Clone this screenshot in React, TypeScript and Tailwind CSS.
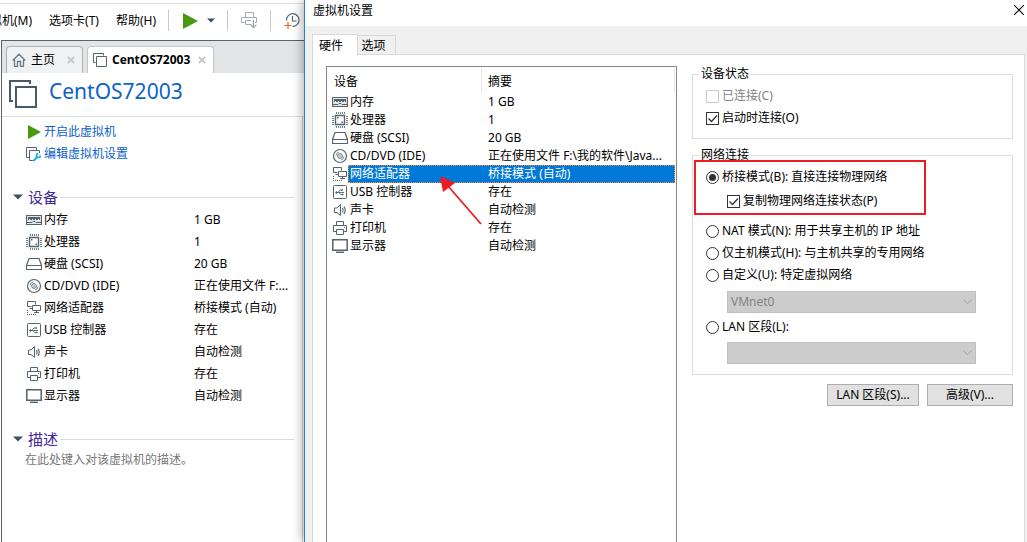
import type { ReactNode } from 'react';

type Device = {
  name: string;
  icon: ReactNode;
  summary: string;
  fullSummary: string;
};

const Icon = ({ children, className = 'w-4 h-4' }: { children: ReactNode; className?: string }) => (
  <svg viewBox="0 0 16 16" className={`shrink-0 ${className}`} fill="none" stroke="#53646f" aria-hidden="true">
    {children}
  </svg>
);

const MemoryIcon = (
  <Icon>
    <path d="M.5 3.500h15v9H.5z" fill="#e3e8eb" strokeWidth="1.200" />
    <path d="M2 5h12v3h-1V7h-1v1h-2V7H9v1H7V7H6v1H4V7H3v1H2z" fill="#53646f" stroke="none" />
    <path d="M1 10.500h5l1-1h2l1 1h5" />
  </Icon>
);

const CpuIcon = (
  <Icon>
    <path d="M3.500 3.500h9v9h-9z" strokeWidth="1.400" />
    <path
      d="M4.500 0v2M6.500 0v2M8.500 0v2M10.500 0v2M12.500 0v2M4.500 14v2M6.500 14v2M8.500 14v2M10.500 14v2M12.500 14v2M0 4.500h2M0 6.500h2M0 8.500h2M0 10.500h2M0 12.500h2M14 4.500h2M14 6.500h2M14 8.500h2M14 10.500h2M14 12.500h2"
      stroke="#6f7e88"
    />
    <path d="M5 5h1.500v1.500H5zM9.500 9.500H11V11H9.500z" fill="#53646f" stroke="none" />
  </Icon>
);

const DiskIcon = (
  <Icon>
    <path d="M3 2.500h10l2.500 7v4H.5v-4zM.5 9.500h15" strokeWidth="1.200" />
  </Icon>
);

const CdIcon = (
  <Icon>
    <circle cx="8" cy="8" r="6.500" strokeWidth="1.200" />
    <circle cx="8" cy="8" r="2.300" />
    <circle cx="8" cy="8" r=".7" fill="#53646f" stroke="none" />
    <path d="M4 7.500A4 4 0 0 1 7 4M12 8.500A4 4 0 0 1 9 12" strokeWidth=".8" />
  </Icon>
);

const NetworkIcon = (
  <Icon>
    <path d="M5.500 6.500h-4v-5h8v3M3.500 8.500h3" />
    <path d="M6.500 5.500h8v5h-8zM10.500 10.500v2M8 12.500h5" />
    <path d="M1.500 10v5M1 14.500h9" strokeDasharray="1 1" />
  </Icon>
);

const UsbIcon = (
  <Icon>
    <rect x="1.500" y="1.500" width="13" height="13" rx="1" />
    <path d="M4 8.500h8M6 8.500l2-2.500h2M7 8.500l1.500 2h2" strokeWidth=".9" />
    <circle cx="4.500" cy="8.500" r=".8" fill="#53646f" />
    <path d="M9.500 5.200H11v1.500H9.500zM10 9.800h1.500v1.500H10z" fill="#53646f" stroke="none" />
  </Icon>
);

const SoundIcon = (
  <Icon>
    <path d="M2.500 6v4.500H5l3.500 3v-11L5 6z" />
    <path d="M10.500 6q1.200 2.200 0 4.500M12 4.500q2.500 3.700 0 7.500" strokeWidth="1.200" />
  </Icon>
);

const PrinterIcon = (
  <Icon>
    <path d="M4.500 5.500v-4h7v4M4.500 11.500h-3v-6h13v6h-3" />
    <path d="M4.500 9.500h7v5h-7zM12 7.500h1" />
  </Icon>
);

const DisplayIcon = (
  <Icon>
    <path d="M.8 1.800h14.400v10.400H.8z" strokeWidth="1.500" />
    <path d="M4 14.300h8" strokeWidth="1.400" />
  </Icon>
);

const devices: Device[] = [
  { name: '内存', icon: MemoryIcon, summary: '1 GB', fullSummary: '1 GB' },
  { name: '处理器', icon: CpuIcon, summary: '1', fullSummary: '1' },
  { name: '硬盘 (SCSI)', icon: DiskIcon, summary: '20 GB', fullSummary: '20 GB' },
  { name: 'CD/DVD (IDE)', icon: CdIcon, summary: '正在使用文件 F:...', fullSummary: '正在使用文件 F:\\我的软件\\Java...' },
  { name: '网络适配器', icon: NetworkIcon, summary: '桥接模式 (自动)', fullSummary: '桥接模式 (自动)' },
  { name: 'USB 控制器', icon: UsbIcon, summary: '存在', fullSummary: '存在' },
  { name: '声卡', icon: SoundIcon, summary: '自动检测', fullSummary: '自动检测' },
  { name: '打印机', icon: PrinterIcon, summary: '存在', fullSummary: '存在' },
  { name: '显示器', icon: DisplayIcon, summary: '自动检测', fullSummary: '自动检测' },
];

const selectedDevice = '网络适配器';

const SectionTitle = ({ children }: { children: string }) => (
  <div className="flex h-5 items-center pl-[11px]">
    <svg viewBox="0 0 10 6" className="h-[6px] w-[10px]" fill="#3d5160" aria-hidden="true">
      <path d="M0 .5h10L5 5.500z" />
    </svg>
    <h2 className="ml-[5px] text-[15px] text-[#41299b]">{children}</h2>
    <div className="ml-[2px] mr-2 h-px flex-1 bg-[#dcdcdc]" />
  </div>
);

const MenuBar = () => (
  <div className="flex h-9 items-center border-t border-[#dcdcdc] pb-[2px]">
    <nav className="flex gap-[17px] whitespace-nowrap">
      <button className="-ml-[10px]">拟机(M)</button>
      <button>选项卡(T)</button>
      <button>帮助(H)</button>
    </nav>
    <div className="ml-3 h-[21px] w-px bg-[#c8c8c8]" />
    <button aria-label="启动" className="ml-[14px] flex items-center gap-[9px]">
      <svg viewBox="0 0 15 16" className="h-4 w-[15px]" fill="#479a10">
        <path d="M0 0l15 8-15 8z" />
      </svg>
      <svg viewBox="0 0 8 5" className="h-[5px] w-2" fill="#3d5160">
        <path d="M0 .5h8L4 4.500z" />
      </svg>
    </button>
    <div className="ml-3 h-[21px] w-px bg-[#c8c8c8]" />
    <button aria-label="发送" className="ml-[13px]">
      <svg viewBox="0 0 17 17" className="size-[17px]" fill="none" stroke="#a3acb2">
        <path d="M4.500 5.500v-5h8v5M4 10.500H.5v-5h15v5H14M10 8.500H4.500v4H10" />
        <path d="M12.500 8v7M9.700 12.700l2.800 3 2.800-3" strokeWidth="1.300" />
      </svg>
    </button>
    <div className="ml-3 h-[21px] w-px bg-[#c8c8c8]" />
    <button aria-label="快照" className="ml-[13px]">
      <svg viewBox="0 0 17 17" className="size-[17px]" fill="none" stroke="#53646f">
        <path d="M2.500 8.500A6.300 6.300 0 1 1 8.500 14.300M8.500 4v5h4" strokeWidth="1.200" />
        <path d="M4 10v7M.5 13.500h7" stroke="#f0622a" strokeWidth="1.200" />
      </svg>
    </button>
  </div>
);

const CloseMark = () => (
  <svg viewBox="0 0 8 8" className="size-2" stroke="#c4c7c9" strokeWidth="1.800" aria-hidden="true">
    <path d="M.8.8l6.400 6.400M7.200.8L.8 7.200" />
  </svg>
);

const MainWindow = () => (
  <div className="flex w-[304px] shrink-0 flex-col overflow-hidden bg-white pt-[3px]">
    <MenuBar />
    <div className="ml-px mt-px flex flex-1 flex-col border-l border-t border-[#5c6266]">
      <div className="flex h-8 items-end gap-1 bg-[#e3e4e6] pl-1">
        <button className="flex h-[27px] w-[77px] items-center rounded-t border border-b-0 border-[#aeb0b2] bg-[#f0f1f2] pl-[5px]">
          <svg viewBox="0 0 14 14" className="size-[14px]" fill="none" stroke="#6b7a84" strokeWidth="1.300">
            <path d="M.7 7.500L7 1.200l6.300 6.300M2.500 6.500v6.800h3V8.500h3v4.800h3V6.500" />
          </svg>
          <span className="ml-[5px] mr-3">主页</span>
          <CloseMark />
        </button>
        <button className="flex h-[27px] w-[127px] items-center rounded-t border border-b-0 border-[#c4c6c8] bg-white pl-[5px]">
          <svg viewBox="0 0 14 14" className="size-[14px]" fill="none" stroke="#53646f">
            <path d="M2.500 9.500h-2v-9h10v2M3.500 3.500h10v10h-10z" />
          </svg>
          <span className="ml-[5px] mr-2 font-['Open_Sans'] font-bold">CentOS72003</span>
          <CloseMark />
        </button>
      </div>
      <div className="flex h-11 items-start border-b border-[#dcdcdc] pl-[7px]">
        <svg viewBox="0 0 28 28" className="mt-[7px] size-7" fill="none" stroke="#465a68" strokeWidth="2">
          <path d="M4 21H1V1h20v3M7 7h20v20H7z" />
        </svg>
        <h1 className="ml-3 mt-1 text-[21px] leading-7 text-[#0d62c9]">CentOS72003</h1>
      </div>
      <div className="mr-px flex-1 border-r border-[#d4d4d4] pt-1">
        <a href="#start" className="flex h-[22px] items-center gap-[3px] pl-[26px] text-[#0d62c9]">
          <svg viewBox="0 0 13 14" className="h-[14px] w-[13px]" fill="#479a10">
            <path d="M0 0l13 7-13 7z" />
          </svg>
          开启此虚拟机
        </a>
        <a href="#edit" className="flex h-[22px] items-center gap-[3px] pl-6 text-[#0d62c9]">
          <svg viewBox="0 0 15 15" className="size-[15px]" fill="none" stroke="#53646f">
            <path d="M3 10.500H.5v-10h10V3M7 13.500H3.500v-10h10V6" />
            <path d="M7.500 14l4-4.500" stroke="#19b4dc" strokeWidth="2" />
            <path d="M14.500 8.500a2 2 0 1 1-2-2" stroke="#19b4dc" strokeWidth="1.700" />
          </svg>
          编辑虚拟机设置
        </a>
        <div className="h-[22px]" />
        <SectionTitle>设备</SectionTitle>
        <table className="mt-[2px] w-full table-fixed">
          <tbody>
            {devices.map((device) => (
              <tr key={device.name} className="h-[22px]">
                <td className="w-[192px] p-0 pl-6">
                  <div className="flex items-center gap-[2px]">
                    {device.icon}
                    {device.name}
                  </div>
                </td>
                <td className="whitespace-nowrap p-0">{device.summary}</td>
              </tr>
            ))}
          </tbody>
        </table>
        <div className="h-[22px]" />
        <SectionTitle>描述</SectionTitle>
        <p className="mt-[3px] pl-[23px] text-[#777]">在此处键入对该虚拟机的描述。</p>
      </div>
    </div>
  </div>
);

const DeviceTable = () => (
  <div className="relative flex-1 border border-b-0 border-[#828790] pr-px">
    <table className="w-full table-fixed border-separate border-spacing-0">
      <colgroup>
        <col className="w-[21px]" />
        <col className="w-[134px]" />
        <col />
      </colgroup>
      <thead>
        <tr className="h-[26px]">
          <th colSpan={2} className="p-0 text-left font-normal">
            <div className="flex h-6 items-center border-r border-[#e5e5e5] pl-[7px] pt-1">设备</div>
          </th>
          <th className="p-0 text-left font-normal">
            <div className="flex h-6 items-center border-r border-[#e5e5e5] pl-[6px] pt-1">摘要</div>
          </th>
        </tr>
      </thead>
      <tbody>
        {devices.map((device) => {
          const active = device.name === selectedDevice;
          return (
            <tr key={device.name} className="h-[18px]">
              <td className="p-0 pl-[5px]">{device.icon}</td>
              <td
                className={
                  active
                    ? 'border-y border-l border-dotted border-[#ff8728] bg-[#0078d7] p-0 pl-px text-white'
                    : 'p-0 pl-[2px]'
                }
              >
                {device.name}
              </td>
              <td
                className={
                  active
                    ? 'whitespace-nowrap border-y border-r border-dotted border-[#ff8728] bg-[#0078d7] p-0 pl-[6px] text-white'
                    : 'whitespace-nowrap p-0 pl-[6px]'
                }
              >
                {device.fullSummary}
              </td>
            </tr>
          );
        })}
      </tbody>
    </table>
    {/* red pointer to the selected adapter */}
    <svg viewBox="0 0 42 50" className="pointer-events-none absolute left-[113px] top-[109px] h-[50px] w-[42px]" aria-hidden="true">
      <path d="M8 10l33 38" stroke="#ed1c24" strokeWidth="1.800" />
      <path d="M0 0l15 7-12 9z" fill="#ed1c24" />
    </svg>
  </div>
);

type OptionProps = {
  label: string;
  type?: 'radio' | 'checkbox';
  checked?: boolean;
  disabled?: boolean;
};

const Option = ({ label, type = 'radio', checked, disabled }: OptionProps) => (
  <label className={`flex h-[22px] items-center gap-[3px] whitespace-nowrap ${disabled ? 'text-[#838383]' : ''}`}>
    <span className="grid size-[13px]">
      <input
        type={type}
        name={type === 'radio' ? 'network' : undefined}
        defaultChecked={checked}
        disabled={disabled}
        className={`peer col-start-1 row-start-1 size-[13px] appearance-none border bg-white ${
          disabled ? 'border-[#ccc]' : 'border-[#333]'
        } ${type === 'radio' ? 'rounded-full' : ''}`}
      />
      <svg
        viewBox="0 0 13 13"
        className="pointer-events-none invisible col-start-1 row-start-1 size-[13px] peer-checked:visible"
        fill="none"
        stroke="#333"
        aria-hidden="true"
      >
        {type === 'radio' ? (
          <circle cx="6.500" cy="6.500" r="3.500" fill="#333" stroke="none" />
        ) : (
          <path d="M2.500 6.500l3 3 5.500-6" strokeWidth="1.300" />
        )}
      </svg>
    </span>
    {label}
  </label>
);

const DisabledSelect = ({ label, value }: { label: string; value: string }) => (
  <div className="ml-[21px] mr-9 grid h-[22px] items-center">
    <select
      disabled
      aria-label={label}
      className="col-start-1 row-start-1 h-[22px] w-full appearance-none border border-[#bfbfbf] bg-[#ccc] pl-[3px] text-[#838383] opacity-100"
    >
      <option>{value}</option>
    </select>
    <svg viewBox="0 0 9 6" className="col-start-1 row-start-1 mr-1 h-[6px] w-[9px] justify-self-end" fill="none" stroke="#a0a0a0" aria-hidden="true">
      <path d="M.5.7l4 4 4-4" />
    </svg>
  </div>
);

const SettingsDialog = () => (
  <div
    role="dialog"
    aria-label="虚拟机设置"
    className="relative flex min-w-0 flex-1 flex-col border-l border-[#1883d7] bg-[#f0f0f0] shadow-[-2px_0_10px_rgba(0,0,0,0.3)]"
  >
    <div className="flex h-[26px] items-start justify-between bg-white pl-2 pr-[3px] pt-[3px]">
      <span>虚拟机设置</span>
      <button aria-label="关闭" className="mt-[2px]">
        <svg viewBox="0 0 10 10" className="size-[10px]" stroke="#000" strokeWidth="1.100">
          <path d="M0 0l10 10M10 0L0 10" />
        </svg>
      </button>
    </div>
    <div className="relative z-10 mt-[7px] flex h-[22px] items-end pl-[7px]">
      <button className="-mb-px h-[22px] w-[46px] border border-b-0 border-[#d9d9d9] bg-white pr-2">硬件</button>
      <button className="mb-px h-[19px] w-[38px] border border-b-0 border-l-0 border-[#d9d9d9] pr-[6px] pt-[2px]">选项</button>
    </div>
    <div className="-mt-px ml-[7px] mr-[2px] flex flex-1 gap-[15px] border border-b-0 border-[#d9d9d9] bg-white pl-[13px] pr-[11px] pt-[11px]">
      <DeviceTable />
      <div className="w-[321px] shrink-0">
        <fieldset className="border border-[#dcdcdc] pb-[9px] pl-[13px] pt-[3px]">
          <legend className="-ml-[7px] h-4 px-[2px] leading-4">设备状态</legend>
          <Option type="checkbox" label="已连接(C)" disabled />
          <Option type="checkbox" label="启动时连接(O)" checked />
        </fieldset>
        <fieldset className="mt-2 border border-[#dcdcdc] pb-[10px] pl-[13px] pt-[3px]">
          <legend className="-ml-[7px] h-4 px-[2px] leading-4">网络连接</legend>
          <div className="relative mb-2">
            <Option label="桥接模式(B): 直接连接物理网络" checked />
            <div className="ml-[21px] mt-[2px]">
              <Option type="checkbox" label="复制物理网络连接状态(P)" checked />
            </div>
            <div className="pointer-events-none absolute -left-3 -top-[6px] h-[55px] w-[232px] border-2 border-[#ed1c24]" />
          </div>
          <Option label="NAT 模式(N): 用于共享主机的 IP 地址" />
          <Option label="仅主机模式(H): 与主机共享的专用网络" />
          <Option label="自定义(U): 特定虚拟网络" />
          <div className="mb-[3px] mt-[5px]">
            <DisabledSelect label="特定虚拟网络" value="VMnet0" />
          </div>
          <Option label="LAN 区段(L):" />
          <div className="mt-[4px]">
            <DisabledSelect label="LAN 区段" value="" />
          </div>
        </fieldset>
        <div className="mt-[9px] flex justify-end gap-2">
          <button className="h-[22px] w-[92px] border border-[#adadad] bg-[#e1e1e1]">LAN 区段(S)...</button>
          <button className="h-[22px] w-[86px] border border-[#adadad] bg-[#e1e1e1]">高级(V)...</button>
        </div>
      </div>
    </div>
  </div>
);

const App = () => {
  return (
    <div className="flex h-screen overflow-hidden bg-white font-['Noto_Sans','Noto_Sans_CJK_SC',sans-serif] text-[12px] leading-4 text-black">
      <MainWindow />
      <SettingsDialog />
    </div>
  );
};

export default App;
